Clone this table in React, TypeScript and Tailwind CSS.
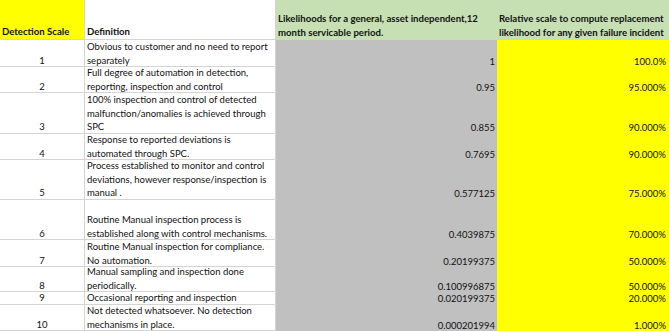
import React from "react";

type Row = { n: string; def: string[]; l: string; p: string; h: string };

const rows: Row[] = [
  { n: "1", def: ["Obvious to customer and no need to report", "separately"], l: "1", p: "100.0%", h: "h-[26px]" },
  { n: "2", def: ["Full degree of automation in detection,", "reporting, inspection and control"], l: "0.95", p: "95.000%", h: "h-[27px]" },
  { n: "3", def: ["100% inspection and control of detected", "malfunction/anomalies is achieved through", "SPC"], l: "0.855", p: "90.000%", h: "h-[40px]" },
  { n: "4", def: ["Response to reported deviations is", "automated through SPC."], l: "0.7695", p: "90.000%", h: "h-[26px]" },
  { n: "5", def: ["Process established to monitor and control", "deviations, however response/inspection is", "manual ."], l: "0.577125", p: "75.000%", h: "h-[40px]" },
  { n: "6", def: ["Routine Manual inspection process is", "established along with control mechanisms."], l: "0.4039875", p: "70.000%", h: "h-[41px]" },
  { n: "7", def: ["Routine Manual inspection for compliance.", "No automation."], l: "0.20199375", p: "50.000%", h: "h-[25px]" },
  { n: "8", def: ["Manual sampling and inspection done", "periodically."], l: "0.100996875", p: "50.000%", h: "h-[26px]" },
  { n: "9", def: ["Occasional reporting and inspection"], l: "0.020199375", p: "20.000%", h: "h-[13px]" },
  { n: "10", def: ["Not detected whatsoever. No detection", "mechanisms in place."], l: "0.000201994", p: "1.000%", h: "h-[27px]" },
];

export default function App() {
  return (
    <div
      className="w-[669px] h-[331px] overflow-hidden bg-white text-[9.5px] leading-[13.5px] text-[#111]"
      style={{ fontFamily: "Lato, 'Liberation Sans', sans-serif" }}
    >
      {/* header */}
      <div className="grid grid-cols-[85px_191px_221px_172px] h-[40px] text-[9.6px]">
        <div className="bg-[#ffff00] border-r border-b border-[#d4d4d4] flex flex-col justify-end pl-[2px] pb-[1px] font-bold whitespace-nowrap">
          Detection Scale
        </div>
        <div className="border-r border-b border-[#d4d4d4] flex flex-col justify-end pl-[2px] pb-[1px] font-bold whitespace-nowrap">
          Definition
        </div>
        <div className="bg-[#c6e0b4] flex flex-col justify-end pl-[2px] pb-[1px] font-bold whitespace-nowrap">
          <span>Likelihoods for a general, asset independent,12</span>
          <span>month servicable period.</span>
        </div>
        <div className="bg-[#c6e0b4] flex flex-col justify-end pl-[2px] pb-[1px] font-bold whitespace-nowrap">
          <span>Relative scale to compute replacement</span>
          <span>likelihood for any given failure incident</span>
        </div>
      </div>
      {rows.map((r) => (
        <div key={r.n} className={`grid grid-cols-[85px_191px_221px_172px] ${r.h}`}>
          <div className="border-r border-b border-[#d4d4d4] flex flex-col justify-end items-center">
            <span className="mb-[-1px]">{r.n}</span>
          </div>
          <div className="border-r border-b border-[#d4d4d4] flex flex-col justify-end pl-[2px] whitespace-nowrap">
            <div className="flex flex-col mb-[-1px]">
              {r.def.map((d, i) => (
                <span key={i}>{d}</span>
              ))}
            </div>
          </div>
          <div className="bg-[#c0c0c0] flex flex-col justify-end items-end pr-[2px]">
            <span className="mb-[-1px]">{r.l}</span>
          </div>
          <div className="bg-[#ffff00] flex flex-col justify-end items-end pr-[3px]">
            <span className="mb-[-1px]">{r.p}</span>
          </div>
        </div>
      ))}
    </div>
  );
}
